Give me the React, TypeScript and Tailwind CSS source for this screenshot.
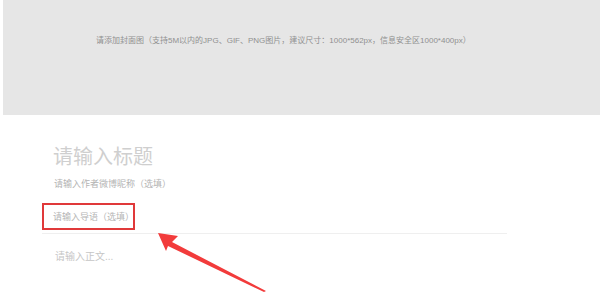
const font = "font-['Liberation_Sans','Noto_Sans_CJK_SC',sans-serif]";

function Arrow() {
  return (
    <svg className="absolute left-0 top-0 pointer-events-none" width="600" height="297" viewBox="0 0 600 297">
      <polygon points="158,233 178,236 172,242 266,291 264,292 168,246 166,251" fill="#f23b3b" />
    </svg>
  );
}

export default function App() {
  return (
    <div className={`relative w-[600px] h-[297px] bg-white overflow-hidden ${font}`}>
      <div className="ml-[3px] h-[115px] bg-[#e6e6e6] pl-[93px] pt-[35px]">
        <p className="text-[8px] leading-[12px] text-[#909090] whitespace-nowrap">
          请添加封面图（支持5M以内的JPG、GIF、PNG图片，建议尺寸：1000*562px，信息安全区1000*400px）
        </p>
      </div>

      <div className="ml-[42px] w-[465px] pt-[30px]">
        <h1 className="pl-[11px] text-[20px] leading-[24px] text-[#cfcfcf]">请输入标题</h1>
        <p className="pl-[12px] mt-[9px] text-[9px] leading-[12px] text-[#b3b3b3]">请输入作者微博昵称（选填）</p>
        <div className="mt-[13px] w-[93px] h-[27px] border-2 border-[#e0393a] flex items-center pl-[9px]">
          <span className="text-[9px] leading-[12px] text-[#b5b5b5] whitespace-nowrap">请输入导语（选填）</span>
        </div>
        <div className="mt-[3px] h-px bg-[#efefef]" />
        <p className="pl-[13px] mt-[16px] text-[10px] leading-[14px] text-[#c6c6c6]">请输入正文...</p>
      </div>

      <Arrow />
    </div>
  );
}
